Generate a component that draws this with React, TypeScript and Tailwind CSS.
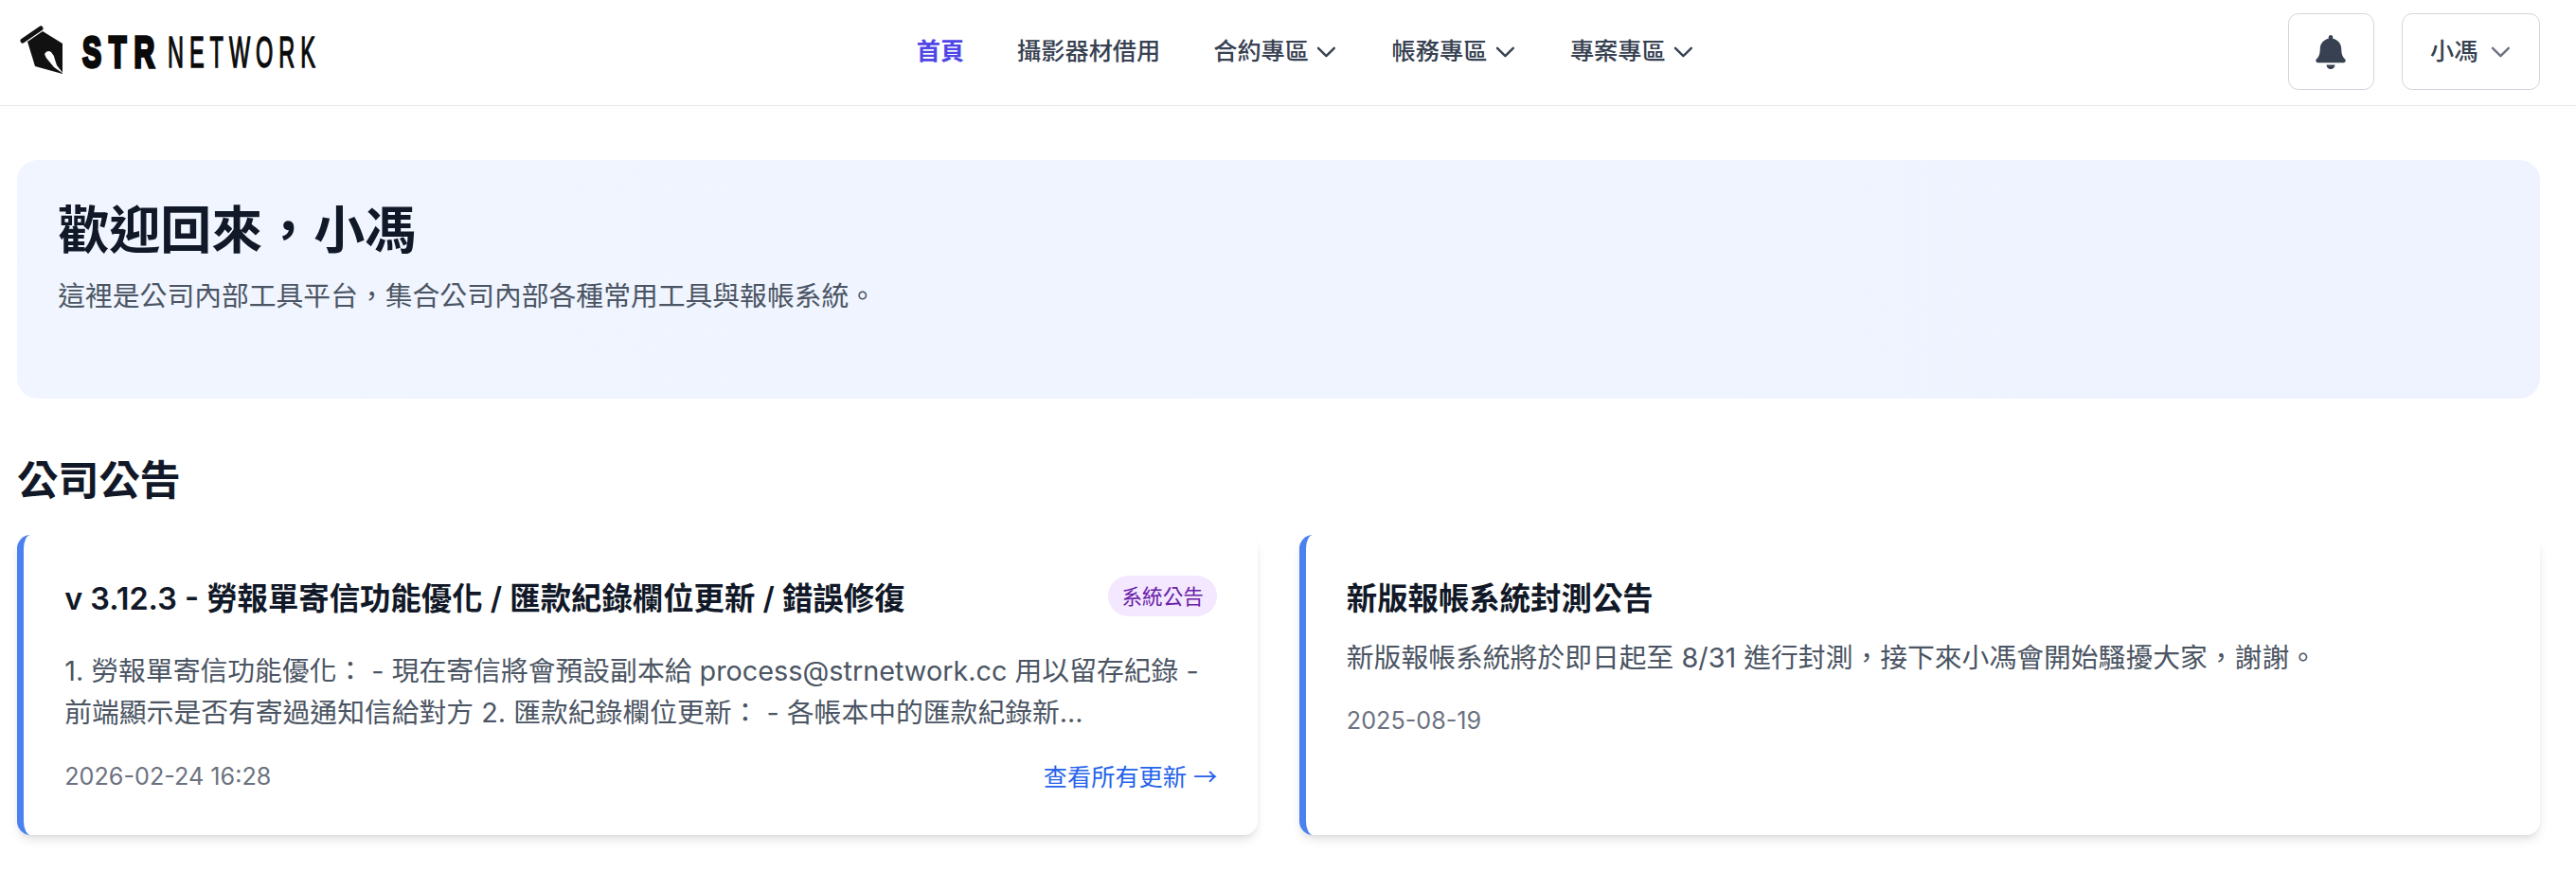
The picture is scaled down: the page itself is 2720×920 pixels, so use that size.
import { FaBell } from "react-icons/fa";

const Chevron = ({ className }: { className: string }) => (
  <svg viewBox="0 0 24 24" fill="none" stroke="currentColor" strokeWidth={2} strokeLinecap="round" strokeLinejoin="round" className={className}>
    <path d="M19 9l-7 7-7-7" />
  </svg>
);

const Logo = () => (
  <svg width="324" height="80" viewBox="0 0 324 80" className="block shrink-0">
    <path d="M6 28 L25 15" fill="none" stroke="#111" strokeWidth="5" strokeLinecap="round" />
    <path d="M11 29 L27 18 L48 31 L48 63 L19 55 Z" fill="#111" strokeLinejoin="round" />
    <path d="M29 42 Q32 37 36 40 Q39 43 40 48 L42 54 L49 63 L39 56 L34 50 Q30 46 29 42 Z" fill="#fff" />
    <text transform="translate(69 56) scale(0.64 1)" textLength="119" lengthAdjust="spacing" fontFamily="'Liberation Sans', sans-serif" fontWeight="700" fontSize="47" stroke="#0a0a0a" strokeWidth="3.5" fill="#0a0a0a">STR</text>
    <text transform="translate(159 56) scale(0.5 1)" textLength="312" lengthAdjust="spacing" fontFamily="'Liberation Sans', sans-serif" fontWeight="400" fontSize="47" stroke="#0a0a0a" strokeWidth="1.5" fill="#0a0a0a">NETWORK</text>
  </svg>
);

const font = "font-['Inter','Noto_Sans_CJK_TC',sans-serif]";
const card = "rounded-[14.4px] border-l-[7.2px] border-[#4a80f0] bg-white p-[43.2px] shadow-[0_7px_12px_-2px_rgba(0,0,0,0.1),0_3px_6px_-3px_rgba(0,0,0,0.1)]";

export default function App() {
  return (
    <div className={`min-h-[920px] bg-white ${font}`}>
      <header className="flex h-[112px] items-center justify-between border-b-[1.8px] border-[#e5e7eb] pr-[38px] pb-[2px] pl-[18px]">
        <Logo />
        <nav className="flex items-center gap-[56px] text-[25.2px] font-medium text-[#374151]">
          <a className="font-semibold text-[#4f46e5]">首頁</a>
          <a>攝影器材借用</a>
          <a className="flex items-center gap-[4.5px]">合約專區<Chevron className="-mr-[1.7px] h-[28.8px] w-[28.8px]" /></a>
          <a className="flex items-center gap-[4.5px]">帳務專區<Chevron className="-mr-[1.7px] h-[28.8px] w-[28.8px]" /></a>
          <a className="flex items-center gap-[4.5px]">專案專區<Chevron className="-mr-[1.7px] h-[28.8px] w-[28.8px]" /></a>
        </nav>
        <div className="flex items-center gap-[29px]">
          <button className="flex h-[81px] w-[91px] items-center justify-center rounded-[10.8px] border-[1.8px] border-[#d1d5db] bg-white text-[#374151]">
            <FaBell size={36} />
          </button>
          <button className="flex h-[81px] w-[146px] items-center justify-start gap-[10px] rounded-[10.8px] border-[1.8px] border-[#d1d5db] bg-white pl-[29px] text-[25.2px] font-medium text-[#374151]">
            小馮<Chevron className="h-[28.8px] w-[28.8px] text-[#6b7280]" />
          </button>
        </div>
      </header>
      <main className="pt-[57px] pr-[38px] pl-[18px]">
        <section className="h-[252px] rounded-[21.6px] bg-gradient-to-r from-[#f0f5ff] to-[#eff3ff] px-[43.2px] pt-[43.2px]">
          <h1 className="text-[54px] leading-[64.8px] font-bold text-[#111827]">歡迎回來，小馮</h1>
          <p className="mt-[14.4px] text-[28.8px] leading-[43.2px] text-[#4b5563]">這裡是公司內部工具平台，集合公司內部各種常用工具與報帳系統。</p>
        </section>
        <h2 className="mt-[57.6px] text-[43.2px] leading-[57.6px] font-semibold text-[#111827]">公司公告</h2>
        <div className="mt-[28.8px] grid grid-cols-2 gap-[43.2px]">
          <article className={card}>
            <div className="flex items-start justify-between gap-[28.8px]">
              <h3 className="text-[32.4px] leading-[50.4px] font-semibold text-[#111827]">v 3.12.3 - 勞報單寄信功能優化 / 匯款紀錄欄位更新 / 錯誤修復</h3>
              <span className="flex h-[43.2px] shrink-0 items-center rounded-full bg-[#f3e8ff] px-[14.4px] text-[21.6px] font-normal text-[#6b21a8]">系統公告</span>
            </div>
            <p className="mt-[28.8px] text-[28.8px] leading-[43.2px] text-[#4b5563]">1. 勞報單寄信功能優化： - 現在寄信將會預設副本給 process@strnetwork.cc 用以留存紀錄 - 前端顯示是否有寄過通知信給對方 2. 匯款紀錄欄位更新： - 各帳本中的匯款紀錄新...</p>
            <div className="mt-[27px] flex items-center justify-between text-[25.2px] leading-[36px]">
              <span className="text-[#6b7280]">2026-02-24 16:28</span>
              <a className="text-[#2563eb]">查看所有更新 <span className="font-['Noto_Sans_CJK_TC',sans-serif]">→</span></a>
            </div>
          </article>
          <article className={card}>
            <h3 className="text-[32.4px] leading-[50.4px] font-semibold text-[#111827]">新版報帳系統封測公告</h3>
            <p className="mt-[14.4px] text-[28.8px] leading-[43.2px] text-[#4b5563]">新版報帳系統將於即日起至 8/31 進行封測，接下來小馮會開始騷擾大家，謝謝。</p>
            <div className="mt-[27px] text-[25.2px] leading-[36px] text-[#6b7280]">2025-08-19</div>
          </article>
        </div>
      </main>
    </div>
  );
}
